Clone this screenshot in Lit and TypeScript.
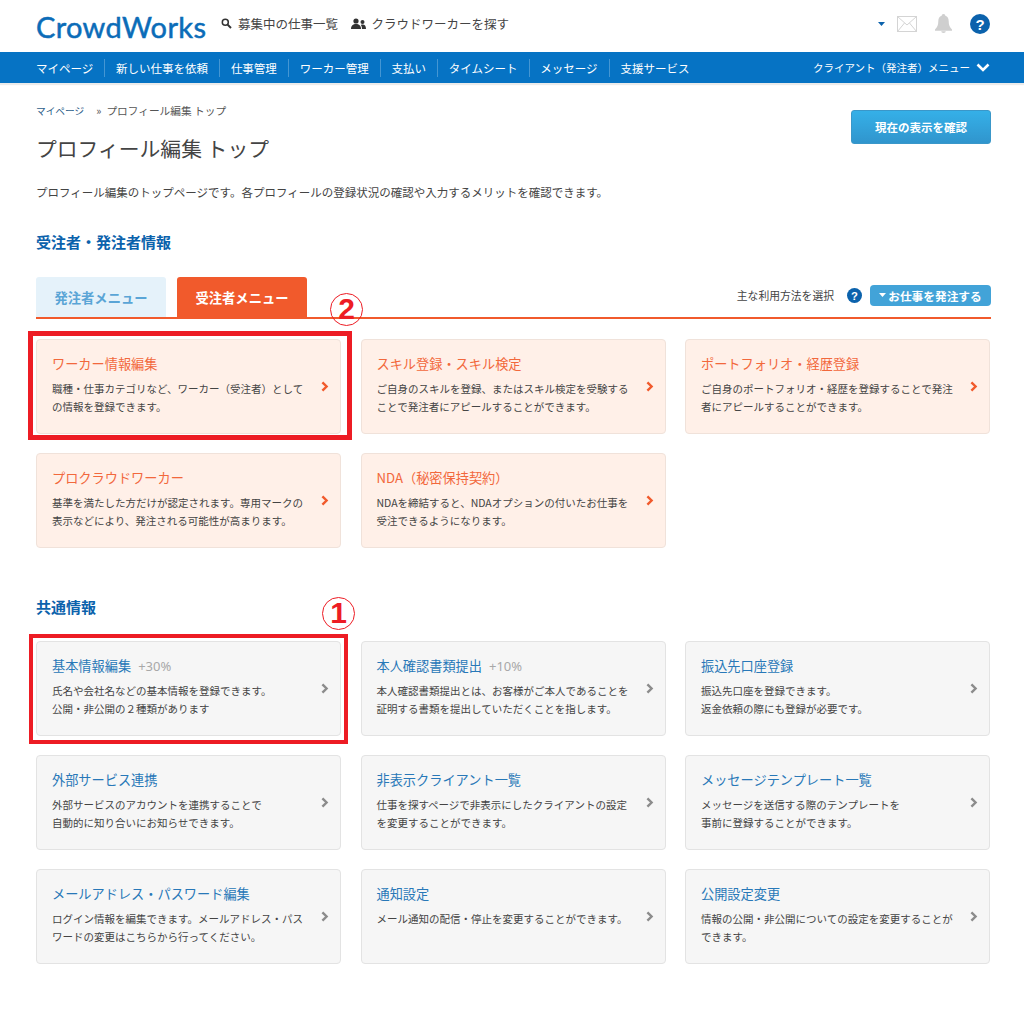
import { LitElement, html, css, nothing } from "lit";
import { customElement } from "lit/decorators.js";

type Card = { t: string; d: string[]; plus?: string; mark?: string };

const worker: Card[] = [
  { t: "ワーカー情報編集", d: ["職種・仕事カテゴリなど、ワーカー（受注者）として", "の情報を登録できます。"], mark: "2" },
  { t: "スキル登録・スキル検定", d: ["ご自身のスキルを登録、またはスキル検定を受験する", "ことで発注者にアピールすることができます。"] },
  { t: "ポートフォリオ・経歴登録", d: ["ご自身のポートフォリオ・経歴を登録することで発注", "者にアピールすることができます。"] },
  { t: "プロクラウドワーカー", d: ["基準を満たした方だけが認定されます。専用マークの", "表示などにより、発注される可能性が高まります。"] },
  { t: "NDA（秘密保持契約）", d: ["NDAを締結すると、NDAオプションの付いたお仕事を", "受注できるようになります。"] },
];
const common: Card[] = [
  { t: "基本情報編集", plus: "+30%", d: ["氏名や会社名などの基本情報を登録できます。", "公開・非公開の２種類があります"], mark: "1" },
  { t: "本人確認書類提出", plus: "+10%", d: ["本人確認書類提出とは、お客様がご本人であることを", "証明する書類を提出していただくことを指します。"] },
  { t: "振込先口座登録", d: ["振込先口座を登録できます。", "返金依頼の際にも登録が必要です。"] },
  { t: "外部サービス連携", d: ["外部サービスのアカウントを連携することで", "自動的に知り合いにお知らせできます。"] },
  { t: "非表示クライアント一覧", d: ["仕事を探すページで非表示にしたクライアントの設定", "を変更することができます。"] },
  { t: "メッセージテンプレート一覧", d: ["メッセージを送信する際のテンプレートを", "事前に登録することができます。"] },
  { t: "メールアドレス・パスワード編集", d: ["ログイン情報を編集できます。メールアドレス・パス", "ワードの変更はこちらから行ってください。"] },
  { t: "通知設定", d: ["メール通知の配信・停止を変更することができます。"] },
  { t: "公開設定変更", d: ["情報の公開・非公開についての設定を変更することが", "できます。"] },
];
const navItems = ["マイページ", "新しい仕事を依頼", "仕事管理", "ワーカー管理", "支払い", "タイムシート", "メッセージ", "支援サービス"];

@customElement("app-root")
export class AppRoot extends LitElement {
  static styles = css`
    :host { display: block; width: 1024px; height: 1024px; background: #fff; color: #444;
      font-family: "Noto Sans CJK JP", "Noto Sans", sans-serif; font-size: 12px; overflow: hidden; }
    * { box-sizing: border-box; }
    .top { height: 52px; padding: 0 34px 0 36px; display: flex; align-items: center; }
    .logo { font-family: "Lato", sans-serif; font-size: 29px; color: #0b6cb8; -webkit-text-stroke: 0.5px #0b6cb8; line-height: 1; width: 170px; letter-spacing: 0.35px; margin-right: 15px; margin-top: 0; white-space: nowrap; }
    .toplink { display: flex; align-items: center; gap: 6px; font-size: 12.5px; color: #444; margin-right: 12.5px; margin-top: -5px; white-space: nowrap; }
    .right { margin-left: auto; display: flex; align-items: center; margin-top: -5px; }
    .right svg { display: block; }
    .nav { height: 31px; background: #0673c4; box-shadow: 0 2px 1px rgba(0,0,0,.08); display: flex; align-items: center; padding: 0 34px 0 36px; color: #fff; font-size: 11.5px; }
    .nav-item { padding-right: 11px; margin-right: 10.8px; border-right: 1px solid rgba(255,255,255,.25); line-height: 18px; white-space: nowrap; }
    .nav-item.last { border-right: 0; }
    .nav-right { margin-left: auto; display: flex; align-items: center; gap: 6px; font-size: 10.5px; white-space: nowrap; }
    .main { padding: 0 33px 0 36px; }
    .head { display: flex; justify-content: space-between; align-items: flex-start; height: 89px; }
    .crumb { font-size: 10.7px; margin-top: 20px; line-height: 16px; color: #555; display: flex; white-space: nowrap; }
    .crumb span { color: #2d5e8a; font-size: 9.7px; }
    .crumb i { font-style: normal; padding: 0 5px 0 12px; }
    h1 { font-weight: 400; font-size: 20.8px; line-height: 32px; margin: 13px 0 0; color: #444; white-space: nowrap; }
    .btn { width: 140px; height: 34px; margin-top: 27px; border-radius: 3px; color: #fff; font-weight: 700; font-size: 11.5px;
      background: linear-gradient(#35b0e8, #3095cd); border: 1px solid #3a97c9; display: flex; align-items: center; justify-content: center; }
    .desc { margin: 11px 0 0; font-size: 11.5px; line-height: 18px; color: #444; white-space: nowrap; }
    h2 { font-size: 15px; line-height: 20px; color: #0b62ac; margin: 31px 0 0; font-weight: 700; }
    .tabs { display: flex; align-items: flex-end; height: 42px; margin-top: 25px; border-bottom: 2px solid #f15a2c; }
    .tab { width: 130px; height: 40px; border-radius: 3px 3px 0 0; display: flex; align-items: center; justify-content: center; font-size: 13.3px; font-weight: 700; }
    .tab.off { background: #e5f2fa; color: #5aa5d6; margin-right: 11px; }
    .tab.on { background: #f15a2c; color: #fff; }
    .tabs-right { margin-left: auto; display: flex; align-items: center; height: 40px; font-size: 10.8px; padding-bottom: 4px; }
    .tabs-label { margin-right: 13px; white-space: nowrap; }
    .pill { margin-left: 8px; width: 121px; height: 21px; border-radius: 4px; background: #42a3d8; color: #fff; font-weight: 700; font-size: 11.7px; display: flex; align-items: center; justify-content: center; gap: 2px; white-space: nowrap; }
    .grid { display: grid; grid-template-columns: repeat(3, 305px); column-gap: 19.5px; row-gap: 19px; }
    .g1 { margin-top: 20px; }
    .g2 { margin-top: 24px; }
    .sec2 { margin-top: 49px; }
    .card { position: relative; height: 95px; border-radius: 4px; padding: 13px 36px 0 15px; border: 1px solid #e3e3e3; background: #f6f6f6; }
    .card.o { background: #fff0e8; border-color: #f0e2da; }
    .tt { font-size: 13.2px; line-height: 22px; color: #2878b8; display: flex; align-items: baseline; gap: 7px; white-space: nowrap; }
    .o .tt { color: #f2683c; }
    .plus { font-size: 13px; color: #a8a8a8; font-family: "Noto Sans", sans-serif; }
    .dl { font-size: 10.5px; line-height: 18px; margin-top: 5px; color: #444; white-space: nowrap; }
    .arrow { position: absolute; right: 11px; top: 41px; }
    .box { position: absolute; border: 5px solid #ed1c24; pointer-events: none; }
    .box.m2 { left: -9px; right: -12px; top: -9px; bottom: -7px; }
    .box.m1 { left: -8px; right: -8px; top: -8px; bottom: -9px; border-width: 4.5px; }
    .mk { position: absolute; width: 33px; height: 33px; border-radius: 50%; border: 1.5px solid #ed1c24; color: #ed1c24;
      font-family: "Liberation Sans", sans-serif; font-weight: 700; font-size: 30px; line-height: 30px; text-align: center; }
    .mk.m2 { left: 293px; top: -47px; }
    .mk.m1 { left: 285px; top: -45px; }
  `;

  chev(color: string) {
    return html`<svg class="arrow" width="8" height="11" viewBox="0 0 8 11"><path d="M1.4 1.3 5.6 5.5 1.4 9.7" fill="none" stroke=${color} stroke-width="2.4"/></svg>`;
  }

  card(c: Card, orange: boolean) {
    return html`<div class="card ${orange ? "o" : ""}">
      <div class="tt">${c.t}${c.plus ? html`<span class="plus">${c.plus}</span>` : nothing}</div>
      <div class="dl">${c.d.map((l) => html`<div>${l}</div>`)}</div>
      ${this.chev(orange ? "#f15a2c" : "#8c8c8c")}
      ${c.mark ? html`<div class="box m${c.mark}"></div><div class="mk m${c.mark}">${c.mark}</div>` : nothing}
    </div>`;
  }

  help(size: number) {
    return html`<svg width=${size} height=${size} viewBox="0 0 20 20"><circle cx="10" cy="10" r="10" fill="#0b62ac"/><text x="10" y="15.5" text-anchor="middle" font-size="15" font-weight="700" fill="#fff" font-family="Liberation Sans">?</text></svg>`;
  }

  render() {
    return html`
      <div class="top">
        <div class="logo">CrowdWorks</div>
        <div class="toplink">
          <svg width="11" height="11" viewBox="0 0 11 11"><circle cx="4.3" cy="4.3" r="3" fill="none" stroke="#333" stroke-width="1.5"/><path d="M6.6 6.6 10 10" stroke="#333" stroke-width="2"/></svg>
          募集中の仕事一覧
        </div>
        <div class="toplink">
          <svg width="15" height="11" viewBox="0 0 15 11"><circle cx="5" cy="3" r="2.6" fill="#333"/><path d="M0 11c0-3.5 2-5 5-5s5 1.500 5 5z" fill="#333"/><circle cx="11.500" cy="4" r="2" fill="#333"/><path d="M11 11c0-2-.4-3-1.200-4 .6-.4 1.200-.5 1.900-.5 2 0 3.300 1.300 3.300 4.500z" fill="#333"/></svg>
          クラウドワーカーを探す
        </div>
        <div class="right">
          <svg width="7" height="4" viewBox="0 0 7 4" style="margin-right:12px"><path d="M0 0h7L3.500 4z" fill="#0b62ac"/></svg>
          <svg width="20" height="16" viewBox="0 0 20 16" style="margin-right:17px"><rect x=".5" y=".5" width="19" height="15" fill="#fff" stroke="#d4d4d4"/><path d="M.5.5 10 9 19.500.5M.5 15.500 7.500 7M19.500 15.500 12.500 7" fill="none" stroke="#d4d4d4"/></svg>
          <svg width="19" height="19" viewBox="0 0 19 19" style="margin-right:17px"><path d="M9.500 0c1.200 0 1.800.8 1.800 1.700 2.500.8 3.400 2.900 3.400 5.500 0 3.800 1 6 3.300 8.300v1.200H1v-1.200c2.300-2.300 3.300-4.500 3.300-8.300 0-2.600.9-4.700 3.400-5.500C7.700.8 8.300 0 9.500 0z" fill="#cfcfcf"/><path d="M7.200 17.300h4.600a2.300 1.700 0 0 1-4.600 0z" fill="#cfcfcf"/></svg>
          ${this.help(20)}
        </div>
      </div>
      <div class="nav">
        ${navItems.map((n, i) => html`<div class="nav-item ${i === navItems.length - 1 ? "last" : ""}">${n}</div>`)}
        <div class="nav-right">クライアント（発注者）メニュー
          <svg width="14" height="9" viewBox="0 0 14 9"><path d="M1.500 1.500 7 7 12.500 1.500" fill="none" stroke="#fff" stroke-width="2.600"/></svg>
        </div>
      </div>
      <div class="main">
        <div class="head">
          <div>
            <div class="crumb"><span>マイページ</span><i>»</i>プロフィール編集 トップ</div>
            <h1>プロフィール編集 トップ</h1>
          </div>
          <div class="btn">現在の表示を確認</div>
        </div>
        <p class="desc">プロフィール編集のトップページです。各プロフィールの登録状況の確認や入力するメリットを確認できます。</p>
        <h2>受注者・発注者情報</h2>
        <div class="tabs">
          <div class="tab off">発注者メニュー</div>
          <div class="tab on">受注者メニュー</div>
          <div class="tabs-right"><span class="tabs-label">主な利用方法を選択</span>
            ${this.help(15)}
            <div class="pill"><svg width="7" height="4" viewBox="0 0 7 4"><path d="M0 0h7L3.500 4z" fill="#fff"/></svg>お仕事を発注する</div>
          </div>
        </div>
        <div class="grid g1">${worker.map((c) => this.card(c, true))}</div>
        <h2 class="sec2">共通情報</h2>
        <div class="grid g2">${common.map((c) => this.card(c, false))}</div>
      </div>
    `;
  }
}
